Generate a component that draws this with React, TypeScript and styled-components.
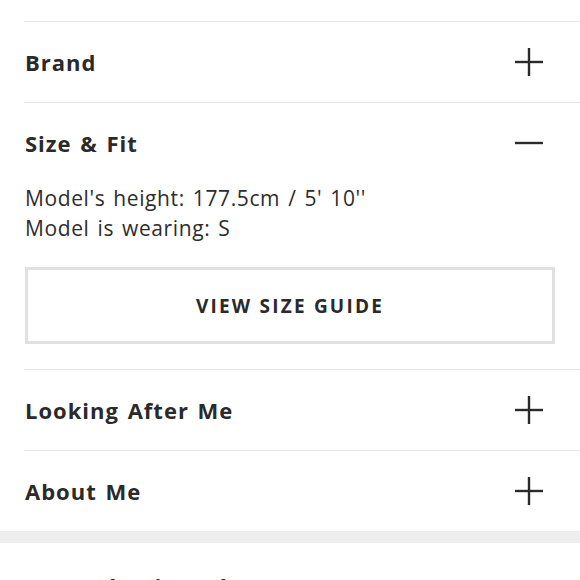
import React from 'react';
import styled, { createGlobalStyle } from 'styled-components';

const GlobalStyle = createGlobalStyle`
  body {
    margin: 0;
    background: #fff;
    font-family: 'Open Sans', 'Liberation Sans', sans-serif;
    color: #2d2d2d;
  }
`;

const Page = styled.div`
  width: 580px;
  height: 580px;
  overflow: hidden;
  padding-top: 21px;
  box-sizing: border-box;
`;

const Accordion = styled.div`
  margin-left: 24px;
`;

const Item = styled.section`
  border-top: 1px solid #e6e6e6;
`;

const Header = styled.div`
  height: 80px;
  display: flex;
  align-items: center;
  justify-content: space-between;
  padding-left: 1px;
  padding-right: 37px;
`;

const Title = styled.h3`
  margin: 0;
  font-size: 22px;
  font-weight: 700;
  letter-spacing: 1px;
  word-spacing: 2px;
  color: #2a2a2a;
`;

const Body = styled.div`
  padding: 0 25px 25px 1px;
`;

const Info = styled.p`
  margin: 0;
  font-size: 21px;
  line-height: 30px;
  font-weight: 400;
  letter-spacing: 0.6px;
  word-spacing: 2px;
  color: #2d2d2d;
`;

const GuideButton = styled.button`
  display: block;
  width: 100%;
  height: 77px;
  margin-top: 24px;
  background: #fff;
  border: 3px solid #e0e0e0;
  font-family: inherit;
  font-size: 19px;
  font-weight: 700;
  letter-spacing: 2.2px;
  color: #2a2a2a;
  cursor: pointer;
`;

const Band = styled.div`
  height: 12px;
  background: #eeeeee;
`;

const Recent = styled.h2`
  margin: 29px 0 0 24px;
  font-size: 23px;
  font-weight: 700;
  letter-spacing: 1px;
  word-spacing: 2px;
  color: #2a2a2a;
`;

const Toggle = ({ open }: { open: boolean }) => (
  <svg width="28" height="28" viewBox="0 0 28 28" fill="none" stroke="#2a2a2a" strokeWidth="2.4">
    <path d="M0 14h28" />
    {!open && <path d="M14 0v28" />}
  </svg>
);

const sections = [
  { title: 'Brand', open: false },
  { title: 'Size & Fit', open: true },
  { title: 'Looking After Me', open: false },
  { title: 'About Me', open: false },
];

const App = () => (
  <>
    <GlobalStyle />
    <Page>
      <Accordion>
        {sections.map((s) => (
          <Item key={s.title}>
            <Header>
              <Title>{s.title}</Title>
              <Toggle open={s.open} />
            </Header>
            {s.open && (
              <Body>
                <Info>Model's height: 177.5cm / 5' 10''</Info>
                <Info>Model is wearing: S</Info>
                <GuideButton>VIEW SIZE GUIDE</GuideButton>
              </Body>
            )}
          </Item>
        ))}
      </Accordion>
      <Band />
      <Recent>Recently viewed</Recent>
    </Page>
  </>
);

export default App;
